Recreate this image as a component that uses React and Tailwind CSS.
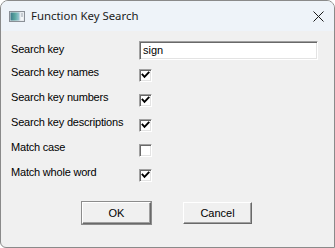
import React from "react";

function Check({ checked }) {
  return (
    <div className="w-[13px] h-[13px] mt-[3px] bg-white border border-t-[#a0a0a0] border-l-[#a0a0a0] border-r-white border-b-white shadow-[inset_1px_1px_0_#696969,inset_-1px_-1px_0_#e3e3e3]">
      {checked && (
        <svg width="11" height="11" viewBox="0 0 11 11" className="block">
          <path d="M2.5 4.5 L4.5 6.8 L8.6 2.6" fill="none" stroke="#000" strokeWidth="1.9" strokeLinecap="square" />
        </svg>
      )}
    </div>
  );
}

const rows = [
  ["Search key names", true],
  ["Search key numbers", true],
  ["Search key descriptions", true],
  ["Match case", false],
  ["Match whole word", true],
];

export default function App() {
  return (
    <div className="w-[335px] h-[248px] bg-[#f0f0f0] border border-[#8a8a8a] rounded-t-[8px] rounded-bl-[6px] overflow-hidden flex flex-col" style={{ fontFamily: '"Liberation Sans", Arial, sans-serif' }}>
      <div className="h-[30px] bg-[#eef3f9] flex items-center shrink-0">
        <svg width="16" height="12" viewBox="0 0 16 12" className="ml-[8px] mt-[1px]">
          <defs>
            <linearGradient id="g" x1="0" y1="0" x2="1" y2="0">
              <stop offset="0" stopColor="#3d7a8a" />
              <stop offset="0.5" stopColor="#5aa7a0" />
              <stop offset="1" stopColor="#9ec9d8" />
            </linearGradient>
          </defs>
          <rect x="0.5" y="0.5" width="15" height="10" fill="#dfe3e8" stroke="#8a8f96" />
          <rect x="1.5" y="1.5" width="9" height="8" fill="url(#g)" />
          <rect x="11.5" y="1.5" width="3" height="8" fill="#f4f6f8" />
          <line x1="12" y1="3" x2="14" y2="3" stroke="#9aa3ad" />
          <line x1="12" y1="5" x2="14" y2="5" stroke="#9aa3ad" />
        </svg>
        <span className="ml-[6px] text-[11.4px] text-[#1b1b1b] leading-none" style={{ fontFamily: '"Noto Sans", sans-serif' }}>Function Key Search</span>
        <svg width="11" height="11" viewBox="0 0 11 11" className="ml-auto mr-[10px]">
          <path d="M0.5 0.5 L10.5 10.5 M10.5 0.5 L0.5 10.5" stroke="#1a1a1a" strokeWidth="1" fill="none" />
        </svg>
      </div>
      <div className="flex flex-col pl-[10px] pt-[10px] text-[11px] tracking-[-0.2px] text-black">
        <div className="flex h-[25px]">
          <div className="w-[128px] mt-[2px] leading-[13px]">Search key</div>
          <div className="w-[179px] h-[19px] bg-white border border-t-[#a0a0a0] border-l-[#a0a0a0] border-r-white border-b-white shadow-[inset_1px_1px_0_#696969,inset_-1px_-1px_0_#e3e3e3] pl-[3px] leading-[17px] tracking-normal">sign</div>
        </div>
        {rows.map(([label, checked]) => (
          <div key={label} className="flex h-[25px]">
            <div className="w-[128px] leading-[13px]">{label}</div>
            <Check checked={checked} />
          </div>
        ))}
        <div className="flex mt-[11px] ml-[71px] gap-[32px] tracking-normal">
          <button className="w-[69px] h-[22px] bg-[#f0f0f0] border border-t-white border-l-white border-r-[#696969] border-b-[#696969] shadow-[inset_-1px_-1px_0_#a0a0a0,0_0_0_0_#000] text-[11px] outline outline-1 outline-[#8c8c8c] -outline-offset-0">OK</button>
          <button className="w-[69px] h-[22px] bg-[#f0f0f0] border border-t-white border-l-white border-r-[#696969] border-b-[#696969] shadow-[inset_-1px_-1px_0_#a0a0a0] text-[11px]">Cancel</button>
        </div>
      </div>
    </div>
  );
}
